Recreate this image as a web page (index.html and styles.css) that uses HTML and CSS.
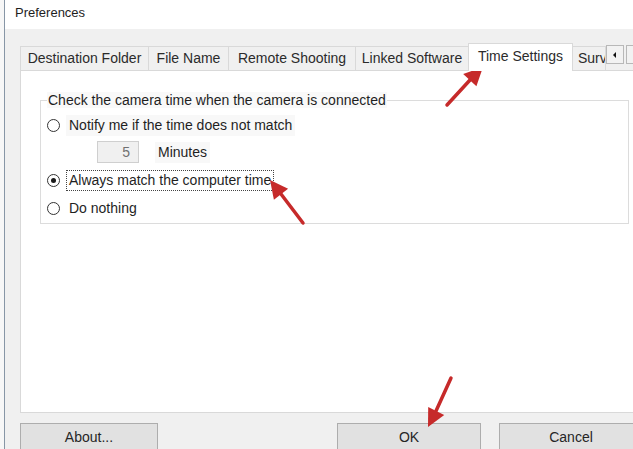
FILE: index.html
```html
<!DOCTYPE html>
<html lang="en">
<head>
<meta charset="utf-8">
<title>Preferences</title>
<link rel="stylesheet" href="styles.css">
</head>
<body>
<div class="window">
  <div class="titlebar">Preferences</div>

  <div class="tabs">
    <div class="tab tab-dest">Destination Folder</div>
    <div class="tab tab-name">File Name</div>
    <div class="tab tab-remote">Remote Shooting</div>
    <div class="tab tab-linked">Linked Software</div>
    <div class="tab tab-time active">Time Settings</div>
    <div class="tab tab-surv">Surv</div>
    <div class="scroller">
      <span class="scroll-btn prev"></span>
      <span class="scroll-btn next"></span>
    </div>
  </div>

  <div class="panel">
    <fieldset class="group">
      <legend>Check the camera time when the camera is connected</legend>
      <div class="option">
        <span class="radio"></span>
        <span class="label shaded">Notify me if the time does not match</span>
      </div>
      <div class="interval">
        <span class="spin">5</span>
        <span class="label shaded">Minutes</span>
      </div>
      <div class="option">
        <span class="radio checked"></span>
        <span class="label focused">Always match the computer time</span>
      </div>
      <div class="option">
        <span class="radio"></span>
        <span class="label">Do nothing</span>
      </div>
    </fieldset>
  </div>

  <div class="buttons">
    <button class="btn about">About...</button>
    <button class="btn ok">OK</button>
    <button class="btn cancel">Cancel</button>
  </div>
</div>

<!-- red callout arrows drawn over the dialog -->
<svg class="callouts" width="633" height="449" viewBox="0 0 633 449">
  <g stroke="#c62a2a" stroke-width="3.5" stroke-linecap="round" fill="#c62a2a">
    <line x1="447" y1="105" x2="470" y2="80"/>
    <polygon stroke="none" points="483,67 476.4,86.3 463.2,74.1"/>
    <line x1="303" y1="223" x2="281" y2="194"/>
    <polygon stroke="none" points="270,180 288.1,188.8 273.9,199.8"/>
    <line x1="451" y1="378" x2="436" y2="411"/>
    <polygon stroke="none" points="428,427 444.2,415.1 428.2,406.9"/>
  </g>
</svg>
</body>
</html>
```
FILE: styles.css
```css
* {
  box-sizing: border-box;
}

html,
body {
  margin: 0;
  height: 100%;
}

body {
  position: relative;
  background: #f7f7f7;
  font-family: "Liberation Sans", Arial, sans-serif;
  font-size: 14px;
  color: #1f1f1f;
  overflow: hidden;
}

.window {
  height: 449px;
  margin-left: 4px;
  border-left: 1px solid #8796a6;
  background: #f0f0f0;
  overflow: hidden;
}

.titlebar {
  height: 29px;
  padding-left: 10px;
  background: #fff;
  font-size: 13px;
  line-height: 26px;
  color: #1e1e1e;
}

/* tab strip */
.tabs {
  position: relative;
  z-index: 1;
  display: flex;
  align-items: flex-end;
  height: 28px;
  margin: 14px 0 0 15px;
  white-space: nowrap;
}

.tab {
  flex: none;
  height: 24px;
  margin-bottom: 1px;
  margin-left: -1px;
  border: 1px solid #d9d9d9;
  border-bottom: none;
  background: #f0f0f0;
  line-height: 23px;
  text-align: center;
  color: #2b2b2b;
  overflow: hidden;
}

.tab:first-child {
  margin-left: 0;
}

.tab-dest { width: 129px; }
.tab-name { width: 81px; }
.tab-remote { width: 128px; }
.tab-linked { width: 114px; }
.tab-time { width: 105px; }

.tab-surv {
  width: 34px;
  padding-left: 5px;
  text-align: left;
}

.tab.active {
  height: 28px;
  margin-bottom: 0;
  background: #fff;
  line-height: 25px;
}

.scroller {
  display: flex;
  flex: none;
  align-self: flex-start;
  margin-top: 2px;
  gap: 2px;
}

.scroll-btn {
  position: relative;
  width: 18px;
  height: 19px;
  border: 1px solid #b8b8b8;
  background: #f2f2f2;
}

/* small solid triangles for the scroll arrows */
.scroll-btn::after {
  content: "";
  position: absolute;
  top: 6px;
  border-top: 3px solid transparent;
  border-bottom: 3px solid transparent;
}

.scroll-btn.prev::after {
  left: 6px;
  border-right: 3px solid #111;
}

.scroll-btn.next::after {
  left: 7px;
  border-left: 3px solid #111;
}

/* tab page */
.panel {
  height: 343px;
  margin: -1px -10px 0 15px;
  padding: 21px 13px 0 19px;
  border: 1px solid #d9d9d9;
  background: #fff;
}

.group {
  margin: 0;
  min-inline-size: 0;
  padding: 0 0 4px 6px;
  border: 1px solid #dcdcdc;
}

.group legend {
  padding: 0 1px;
  line-height: 16px;
  background: #f9f9f9;
}

.option {
  display: flex;
  align-items: center;
  height: 22px;
  margin-top: 6px;
}

.radio {
  position: relative;
  flex: none;
  width: 13px;
  height: 13px;
  margin-right: 6px;
  border: 1px solid #333;
  border-radius: 50%;
  background: #fff;
}

.radio.checked::after {
  content: "";
  position: absolute;
  left: 3px;
  top: 3px;
  width: 5px;
  height: 5px;
  border-radius: 50%;
  background: #1a1a1a;
}

.label {
  padding: 0 2px;
  border: 1px solid transparent;
  line-height: 19px;
  white-space: nowrap;
}

.label.shaded {
  background: #f8f8f8;
}

.label.focused {
  border: 1px dotted #444;
}

.interval {
  display: flex;
  align-items: center;
  height: 22px;
  margin-top: 5px;
  padding-left: 50px;
}

.spin {
  width: 42px;
  height: 22px;
  margin-right: 16px;
  padding-right: 8px;
  border: 1px solid #cfcfcf;
  background: #f0f0f0;
  line-height: 20px;
  text-align: right;
  color: #707070;
}

/* dialog buttons */
.buttons {
  display: flex;
  margin: 10px 0 0 15px;
}

.btn {
  flex: none;
  height: 28px;
  padding: 0;
  border: 1px solid #adadad;
  background: #e1e1e1;
  font-family: inherit;
  font-size: 14px;
  color: #262626;
}

.about {
  width: 138px;
}

.ok {
  width: 144px;
  margin-left: 179px;
}

.cancel {
  width: 144px;
  margin-left: 18px;
}

.callouts {
  position: absolute;
  left: 0;
  top: 0;
  pointer-events: none;
}
```
